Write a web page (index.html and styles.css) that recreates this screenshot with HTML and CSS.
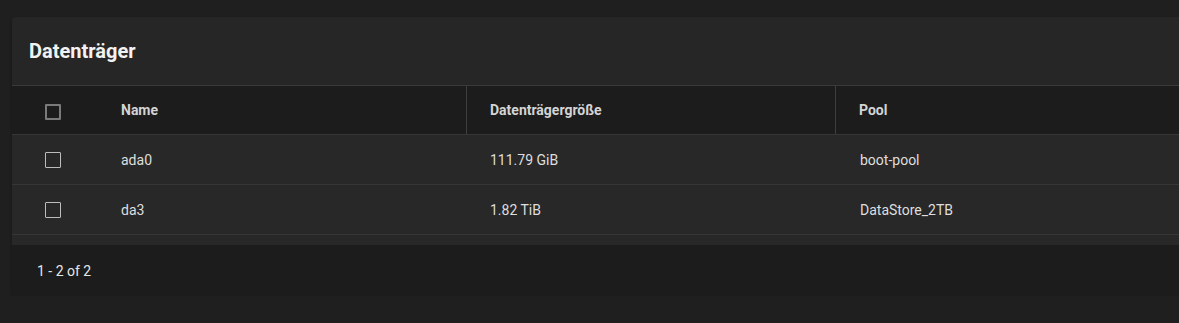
FILE: index.html
```html
<!DOCTYPE html>
<html lang="de">
<head>
  <meta charset="UTF-8">
  <meta name="viewport" content="width=device-width, initial-scale=1.0">
  <title>Datenträger</title>
  <link rel="stylesheet" href="styles.css">
</head>
<body>
  <div class="card">
    <div class="card-header">
      <h2>Datenträger</h2>
    </div>

    <div class="table">
      <div class="row head">
        <div class="cell check"><span class="box"></span></div>
        <div class="cell">Name</div>
        <div class="cell sep">Datenträgergröße</div>
        <div class="cell sep">Pool</div>
      </div>
      <div class="row">
        <div class="cell check"><span class="box"></span></div>
        <div class="cell">ada0</div>
        <div class="cell">111.79 GiB</div>
        <div class="cell">boot-pool</div>
      </div>
      <div class="row">
        <div class="cell check"><span class="box"></span></div>
        <div class="cell">da3</div>
        <div class="cell">1.82 TiB</div>
        <div class="cell">DataStore_2TB</div>
      </div>
      <div class="spacer"></div>
    </div>

    <div class="paginator">1 - 2 of 2</div>
  </div>
</body>
</html>
```

FILE: styles.css
```css
* {
  box-sizing: border-box;
}
body {
  margin: 0;
  padding: 17px 0 0 12px;
  background: #1f1f1f;
  font-family: Roboto, "Noto Sans", sans-serif;
  color: #dedede;
  overflow: hidden;
}
.card {
  width: 1200px;
  background: #262626;
  border-radius: 4px 0 0 4px;
  box-shadow: 0 2px 3px rgba(0, 0, 0, 0.35);
  overflow: hidden;
}
.card-header {
  height: 69px;
  display: flex;
  align-items: center;
  padding-left: 17px;
  border-bottom: 1px solid #3a3a3a;
}
.card-header h2 {
  margin: 0;
  font-size: 20px;
  font-weight: 700;
  color: #f2f2f2;
}
.row {
  display: grid;
  grid-template-columns: 85px 369px 369px 1fr;
  height: 50px;
  background: #282828;
  border-bottom: 1px solid #363636;
  font-size: 14px;
}
.row.head {
  height: 49px;
  background: #1c1c1c;
  font-weight: 700;
  color: #d4d4d4;
}
.cell {
  display: flex;
  align-items: center;
  padding-left: 24px;
}
.cell.sep {
  border-left: 1px solid #3e3e3e;
  padding-left: 23px;
}
.row:not(.head) .cell:nth-child(4) {
  padding-left: 25px;
}
.cell.check {
  padding-left: 33px;
}
.row.head .box {
  margin-top: 3px;
}
.box {
  width: 16px;
  height: 16px;
  border: 2px solid #7a7a7a;
  border-radius: 1px;
}
.row:not(.head) .box {
  border-color: #bdbdbd;
  border-width: 1.5px;
}
.spacer {
  height: 10px;
  background: #282828;
}
.paginator {
  height: 51px;
  display: flex;
  align-items: center;
  padding-left: 25px;
  background: #1c1c1c;
  font-size: 14px;
  color: #e6e6e6;
}
```
